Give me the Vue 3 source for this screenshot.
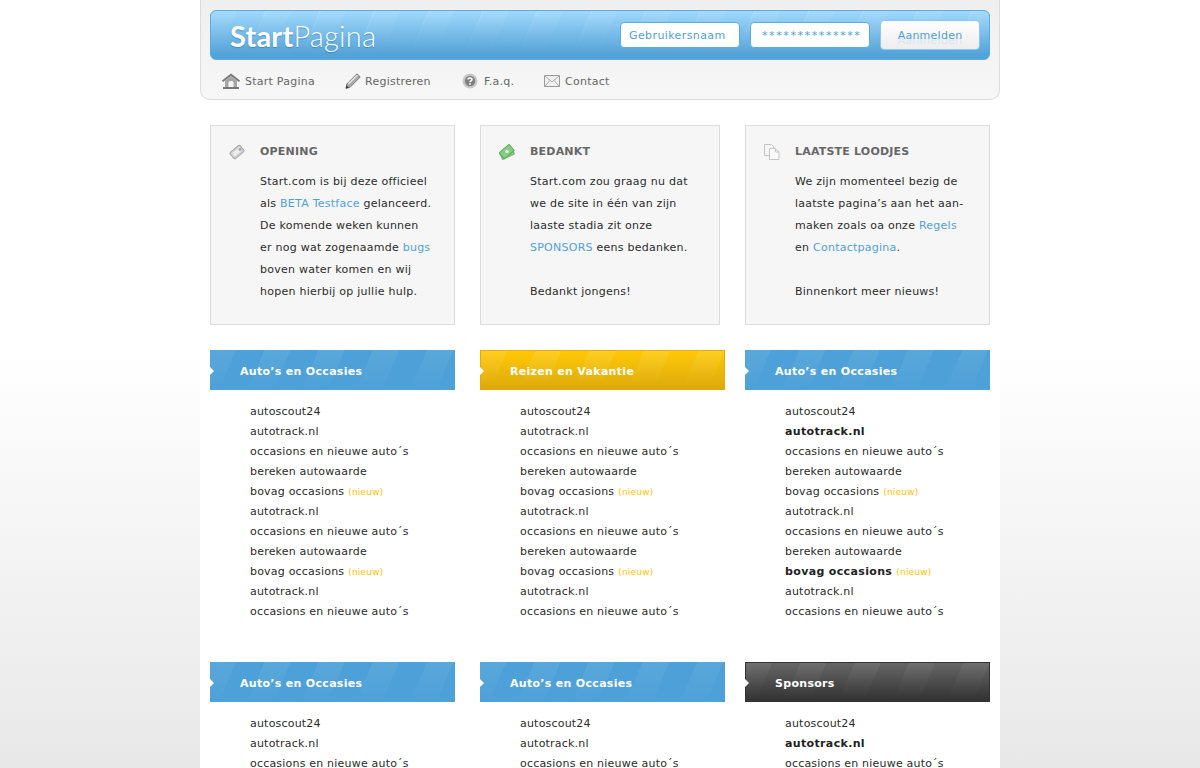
<script setup>
const navItems = [
  { label: 'Start Pagina', icon: 'home' },
  { label: 'Registreren', icon: 'pencil' },
  { label: 'F.a.q.', icon: 'faq' },
  { label: 'Contact', icon: 'mail' },
];

const baseLinks = [
  { text: 'autoscout24' },
  { text: 'autotrack.nl' },
  { text: 'occasions en nieuwe auto´s' },
  { text: 'bereken autowaarde' },
  { text: 'bovag occasions', isNew: true },
  { text: 'autotrack.nl' },
  { text: 'occasions en nieuwe auto´s' },
  { text: 'bereken autowaarde' },
  { text: 'bovag occasions', isNew: true },
  { text: 'autotrack.nl' },
  { text: 'occasions en nieuwe auto´s' },
];

// third column has a couple of highlighted links
const boldLinks = baseLinks.map((link, i) => ({ ...link, bold: i === 1 || i === 8 }));

const sections = [
  { title: 'Auto’s en Occasies', tone: 'blue', links: baseLinks },
  { title: 'Reizen en Vakantie', tone: 'yellow', links: baseLinks },
  { title: 'Auto’s en Occasies', tone: 'blue', links: boldLinks },
  { title: 'Auto’s en Occasies', tone: 'blue', links: baseLinks },
  { title: 'Auto’s en Occasies', tone: 'blue', links: baseLinks },
  { title: 'Sponsors', tone: 'dark', links: boldLinks },
];
</script>

<template>
  <div class="wrapper">
    <header class="top">
      <div class="top-bar">
        <div class="logo"><strong>Start</strong>Pagina</div>
        <form class="login" @submit.prevent>
          <input class="field" type="text" value="Gebruikersnaam" />
          <input class="field field-pass" type="text" value="**************" />
          <button class="login-btn" type="submit">Aanmelden</button>
        </form>
      </div>
      <nav class="nav">
        <a v-for="item in navItems" :key="item.label" href="#" class="nav-item" :class="'nav-' + item.icon">
          <svg v-if="item.icon === 'home'" width="18" height="16" viewBox="0 0 18 16">
            <path d="M9 .5 0 7.500 1 9 9 3l8 6 1-1.500z" fill="#777" />
            <path d="M9 3 3 7.600V14h12V7.600z" fill="#a6a6a6" />
            <path d="M6.500 14V9.500C6.500 7.500 11.500 7.500 11.500 9.500V14z" fill="#f4f4f4" />
            <path d="M1 14h16v2H1z" fill="#777" />
          </svg>
          <svg v-else-if="item.icon === 'pencil'" width="16" height="16" viewBox="0 0 16 16">
            <path d="M12 .8 15.200 4 5 14.300 1 15.300 1.800 11z" fill="#aaa" stroke="#777" stroke-width="1" />
            <path d="M3.500 10.800 12.300 2.200" stroke="#e4e4e4" stroke-width="1.600" />
            <path d="M.8 15.500 1.500 12.300 3.800 14.700z" fill="#333" />
          </svg>
          <svg v-else-if="item.icon === 'faq'" width="16" height="16" viewBox="0 0 16 16">
            <circle cx="8" cy="8" r="7.500" fill="#c8c8c8" />
            <circle cx="8" cy="8" r="5.200" fill="#808080" />
            <path d="M6 6.500C6 4.600 10 4.600 10 6.500 10 8 8 7.800 8 9.300" fill="none" stroke="#fff" stroke-width="1.500" />
            <path d="M7.200 10.300h1.600v1.500H7.200z" fill="#fff" />
          </svg>
          <svg v-else width="16" height="12" viewBox="0 0 16 12">
            <path d="M.5.500h15v11H.5z" fill="#f1f1f1" stroke="#9a9a9a" />
            <path d="M1 1 8 7l7-6M1 11l5-5.500M15 11l-5-5.500" fill="none" stroke="#a8a8a8" />
          </svg>
          <span>{{ item.label }}</span>
        </a>
      </nav>
    </header>

    <main class="grid">
      <section class="info">
        <svg class="info-icon" width="16" height="16" viewBox="0 0 16 16">
          <rect x="1.500" y="4" width="13" height="8" rx="1.500" transform="rotate(-40 8 8)" fill="#d2d2d2" stroke="#a6a6a6" />
          <rect x="3.500" y="6" width="9" height="4" transform="rotate(-40 8 8)" fill="#ececec" />
          <circle cx="11" cy="5.500" r="1.300" fill="#6aa5d6" />
        </svg>
        <h3>OPENING</h3>
        <p>
          Start.com is bij deze officieel<br />
          als <a href="#">BETA Testface</a> gelanceerd.<br />
          De komende weken kunnen<br />
          er nog wat zogenaamde <a href="#">bugs</a><br />
          boven water komen en wij<br />
          hopen hierbij op jullie hulp.
        </p>
      </section>
      <section class="info">
        <svg class="info-icon" width="16" height="16" viewBox="0 0 16 16">
          <rect x="1.500" y="6" width="13" height="7" transform="rotate(-25 8 9.500)" fill="#93cf93" stroke="#6cb56c" />
          <rect x="1.500" y="3.500" width="13" height="8" transform="rotate(-40 8 8)" fill="#86cb86" stroke="#5faa5f" />
          <circle cx="8" cy="7.500" r="1.800" fill="#d8f2d8" />
        </svg>
        <h3>BEDANKT</h3>
        <p>
          Start.com zou graag nu dat<br />
          we de site in één van zijn<br />
          laaste stadia zit onze<br />
          <a href="#">SPONSORS</a> eens bedanken.<br />
          <br />
          Bedankt jongens!
        </p>
      </section>
      <section class="info">
        <svg class="info-icon" width="16" height="16" viewBox="0 0 16 16">
          <path d="M.5.500h7l2 2v9h-9z" fill="#f6f6f6" stroke="#c4c4c4" />
          <path d="M5.500 4.500h6l3.500 3.500v7.500H5.500z" fill="#fafafa" stroke="#c4c4c4" />
          <path d="M11.500 4.500V8H15" fill="none" stroke="#c4c4c4" />
        </svg>
        <h3>LAATSTE LOODJES</h3>
        <p>
          We zijn momenteel bezig de<br />
          laatste pagina’s aan het aan-<br />
          maken zoals oa onze <a href="#">Regels</a><br />
          en <a href="#">Contactpagina</a>.<br />
          <br />
          Binnenkort meer nieuws!
        </p>
      </section>

      <section v-for="(section, index) in sections" :key="index" class="block">
        <h2 class="block-head" :class="section.tone">{{ section.title }}</h2>
        <ul class="links">
          <li v-for="(link, i) in section.links" :key="i">
            <a href="#" :class="{ bold: link.bold }">{{ link.text }}</a>
            <span v-if="link.isNew" class="new">(nieuw)</span>
          </li>
        </ul>
      </section>
    </main>
  </div>
</template>

<style scoped>
.wrapper {
  width: 800px;
  margin: 0 auto;
  background: #fff;
  font-family: "DejaVu Sans", Verdana, sans-serif;
  font-size: 11px;
  color: #333;
}

.top {
  box-sizing: border-box;
  height: 100px;
  padding: 10px 9px 0;
  background: linear-gradient(#efefef, #f7f7f7);
  border: 1px solid #dcdcdc;
  border-top: none;
  border-radius: 0 0 10px 10px;
}

.top-bar {
  box-sizing: border-box;
  height: 50px;
  display: flex;
  justify-content: space-between;
  align-items: center;
  padding: 0 9px 0 19px;
  border-radius: 6px;
  border: 1px solid #5aabdf;
  background:
    linear-gradient(rgba(84, 163, 216, 0), rgba(84, 163, 216, 1) 90%),
    repeating-linear-gradient(113deg, rgba(255, 255, 255, 0.2) 0 1px, rgba(255, 255, 255, 0.07) 1px 24px, transparent 24px 50px),
    #a0d8fc;
}

.logo {
  font-family: Lato, sans-serif;
  font-size: 29px;
  font-weight: 300;
  letter-spacing: 0.2px;
  color: #fff;
  text-shadow: 0 1px 1px rgba(40, 100, 150, 0.5);
}

.logo strong {
  font-weight: 700;
}

.login {
  display: flex;
  align-items: center;
  gap: 10px;
}

.field {
  box-sizing: border-box;
  width: 120px;
  height: 26px;
  padding: 0 8px;
  border: 1px solid #5aabdf;
  border-radius: 4px;
  background: #fff;
  font-family: inherit;
  font-size: 11px;
  letter-spacing: 0.4px;
  color: #4ea1d8;
}

.field-pass {
  padding: 0 0 0 11px;
  letter-spacing: 1.6px;
}

.login-btn {
  box-sizing: border-box;
  width: 100px;
  height: 30px;
  padding-top: 2px;
  border: 1px solid #8fc6ea;
  border-radius: 4px;
  background: linear-gradient(#fff, #ededed);
  font-family: inherit;
  font-size: 11px;
  letter-spacing: 0.25px;
  color: #4ea1d8;
  text-shadow: 0 5px 1px rgba(78, 161, 216, 0.18);
}

.nav {
  display: flex;
  height: 42px;
  align-items: center;
  padding-left: 12px;
}

.nav-item {
  display: flex;
  align-items: center;
  color: #666;
  text-decoration: none;
  letter-spacing: 0.25px;
}

.nav-home {
  width: 123px;
  gap: 5px;
}

.nav-pencil {
  width: 117px;
  gap: 4px;
}

.nav-faq {
  width: 82px;
  gap: 6px;
}

.nav-mail {
  gap: 5px;
}

.grid {
  display: grid;
  grid-template-columns: 245px 240px 245px;
  column-gap: 25px;
  padding: 25px 10px 0;
  align-items: start;
}

.info {
  position: relative;
  box-sizing: border-box;
  height: 200px;
  margin-bottom: 25px;
  padding: 19px 10px 0 49px;
  background: #f6f6f6;
  border: 1px solid #dcdcdc;
}

.info-icon {
  position: absolute;
  left: 18px;
  top: 18px;
}

.info h3 {
  margin: 0 0 12px;
  font-size: 11px;
  line-height: 14px;
  font-weight: 700;
  letter-spacing: 0.2px;
  color: #666;
}

.info p {
  margin: 0;
  line-height: 22px;
  letter-spacing: 0.25px;
  white-space: nowrap;
  color: #2b2b2b;
}

.info a {
  color: #4ea1d8;
  text-decoration: none;
}

.block {
  height: 312px;
}

/* the middle column's bars are wider than its info box */
.block:nth-of-type(3n + 2) {
  margin-right: -5px;
}

.block-head {
  position: relative;
  box-sizing: border-box;
  height: 40px;
  margin: 0;
  padding-left: 30px;
  font-size: 11px;
  font-weight: 700;
  line-height: 43px;
  letter-spacing: 0.3px;
  color: #fff;
}

.block-head::before {
  content: "";
  position: absolute;
  left: 0;
  top: 17px;
  border-style: solid;
  border-width: 4px 0 4px 4px;
  border-color: transparent transparent transparent #fff;
}

.block-head.blue {
  background:
    linear-gradient(rgba(78, 161, 216, 0), rgba(78, 161, 216, 1) 95%),
    repeating-linear-gradient(113deg, rgba(255, 255, 255, 0.07) 0 24px, transparent 24px 50px),
    #4ea1d8;
}

.block-head.yellow {
  border: 1px solid #e0ac0a;
  border-bottom: none;
  padding-left: 29px;
  line-height: 41px;
  background:
    linear-gradient(rgba(222, 170, 10, 0), rgba(222, 170, 10, 1) 95%),
    repeating-linear-gradient(113deg, rgba(255, 255, 255, 0.1) 0 24px, transparent 24px 50px),
    #ffc907;
}

.block-head.dark {
  border: 1px solid #333;
  border-bottom: none;
  padding-left: 29px;
  line-height: 41px;
  background:
    linear-gradient(rgba(51, 51, 51, 0), rgba(51, 51, 51, 1) 95%),
    repeating-linear-gradient(113deg, rgba(255, 255, 255, 0.06) 0 24px, transparent 24px 50px),
    #666;
}

.block-head.yellow::before,
.block-head.dark::before {
  left: -1px;
  top: 16px;
}

.links {
  margin: 0;
  padding: 11px 0 0 40px;
  list-style: none;
}

.links li {
  height: 20px;
  line-height: 22px;
  white-space: nowrap;
  letter-spacing: 0.2px;
}

.links a {
  color: #2b2b2b;
  text-decoration: none;
}

.links a.bold {
  font-weight: 700;
  letter-spacing: 0.35px;
  color: #222;
}

.new {
  margin-left: 4px;
  font-size: 9px;
  color: #ffc400;
}
</style>

<style>
html {
  overflow: hidden;
}

body {
  background: linear-gradient(#fff 350px, #e8e8e8 768px) no-repeat;
  background-size: 100% 768px;
  background-color: #e8e8e8;
}
</style>
